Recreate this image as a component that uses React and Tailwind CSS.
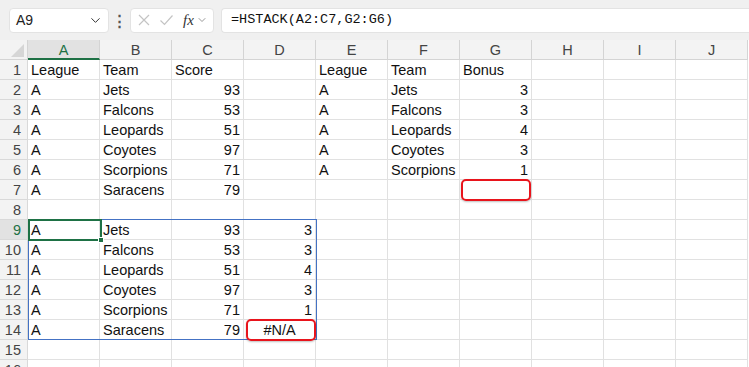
import { ChevronDown } from "lucide-react";

const cols = ["A", "B", "C", "D", "E", "F", "G", "H", "I", "J"];
const teams = ["Jets", "Falcons", "Leopards", "Coyotes", "Scorpions", "Saracens"];
const scores = [93, 53, 51, 97, 71, 79];
const bonus = [3, 3, 4, 3, 1];

// build the sheet: each row is a map of column -> value
function buildRows() {
  const rows = [];
  rows.push({ A: "League", B: "Team", C: "Score", E: "League", F: "Team", G: "Bonus" });
  for (let i = 0; i < 6; i++) {
    const r = { A: "A", B: teams[i], C: scores[i] };
    if (i < 5) {
      r.E = "A";
      r.F = teams[i];
      r.G = bonus[i];
    }
    rows.push(r);
  }
  rows.push({});
  for (let i = 0; i < 6; i++) {
    rows.push({ A: "A", B: teams[i], C: scores[i], D: i < 5 ? bonus[i] : "#N/A" });
  }
  rows.push({});
  rows.push({});
  return rows;
}

function Cell({ value }) {
  const isNum = typeof value === "number";
  const isErr = value === "#N/A";
  return (
    <div
      className={`h-5 border-r border-b border-[#e1e1e1] text-[14.5px] pt-px leading-[19px] text-[#111] px-[3px] whitespace-nowrap ${
        isNum ? "text-right" : isErr ? "text-center" : "text-left"
      }`}
    >
      {value}
    </div>
  );
}

function FormulaBar() {
  return (
    <div className="h-10 bg-[#f0f0f0] flex items-center pl-[9px] gap-0">
      <div className="w-[100px] h-[25px] bg-white rounded-[4px] border border-[#e3e3e3] flex items-center justify-between pl-[6px] pr-[5px]">
        <span className="text-[14px] text-[#222]">A9</span>
        <ChevronDown size={15} strokeWidth={1.6} className="text-[#333]" />
      </div>
      <div className="w-[21px] flex justify-center text-[#555] text-[15px] font-bold leading-none">⋮</div>
      <div className="w-[84px] h-[25px] bg-white rounded-[4px] border border-[#e3e3e3] flex items-center pl-[6px] pr-[3px]">
        <svg width="14" height="14" viewBox="0 0 14 14" className="mr-[8px]">
          <path d="M2 2 L12 12 M12 2 L2 12" stroke="#c4c4c4" strokeWidth="1.2" fill="none" />
        </svg>
        <svg width="15" height="14" viewBox="0 0 15 14" className="mr-[9px]">
          <path d="M1.5 7.5 L5.5 11.5 L13.5 2.5" stroke="#c4c4c4" strokeWidth="1.2" fill="none" />
        </svg>
        <span className="text-[15px] italic text-[#333] leading-none" style={{ fontFamily: '"Liberation Serif", serif' }}>
          fx
        </span>
        <ChevronDown size={12} strokeWidth={1.5} className="text-[#777] ml-[2px]" />
      </div>
      <div className="flex-1 h-[25px] bg-white rounded-l-[4px] border border-r-0 border-[#e3e3e3] ml-[7px] flex items-center pl-[9px]">
        <span className="text-[13.5px] text-[#111] font-['Liberation_Mono',monospace]">=HSTACK(A2:C7,G2:G6)</span>
      </div>
    </div>
  );
}

export default function App() {
  const rows = buildRows();
  return (
    <div className="w-[749px] h-[367px] overflow-hidden bg-white font-['Liberation_Sans',Arial,sans-serif] relative">
      <FormulaBar />
      <div className="grid grid-cols-[28px_repeat(10,72px)]">
        {/* column headers */}
        <div className="h-5 bg-[#f3f3f3] border-r border-b border-[#d4d4d4] flex items-end justify-end pr-[3px] pb-[2px]">
          <svg width="13" height="13" viewBox="0 0 13 13">
            <path d="M13 0 L13 13 L0 13 Z" fill="#d6d6d6" />
          </svg>
        </div>
        {cols.map((c) => (
          <div
            key={c}
            className={`h-5 text-[14.5px] pt-px leading-[18px] text-center border-r border-[#d4d4d4] ${
              c === "A"
                ? "bg-[#e2e2e2] text-[#1e7145] border-b-2 border-b-[#1e7145]"
                : "bg-[#f3f3f3] text-[#444] border-b border-b-[#d4d4d4]"
            }`}
          >
            {c}
          </div>
        ))}
        {rows.map((r, i) => (
          <div key={i} className="contents">
            <div
              className={`h-5 pr-[6px] text-right text-[14.5px] pt-px leading-[19px] border-r border-b border-[#d9d9d9] ${
                i === 8 ? "bg-[#e2e2e2] text-[#1e7145]" : "bg-[#f3f3f3] text-[#444]"
              }`}
            >
              {i + 1}
            </div>
            {cols.map((c) => (
              <Cell key={c} value={r[c]} />
            ))}
          </div>
        ))}
      </div>

      {/* spill range outline A9:D14 */}
      <div className="absolute left-[28px] top-[219px] w-[289px] h-[121px] border border-[#4472c4] pointer-events-none" />
      {/* active cell A9 */}
      <div className="absolute left-[28px] top-[219px] w-[74px] h-[22px] border-2 border-[#1e7145] pointer-events-none" />
      <div className="absolute left-[98px] top-[237px] w-[6px] h-[6px] bg-[#1e7145] border border-white pointer-events-none" />

      {/* red callouts */}
      <div className="absolute left-[461px] top-[179px] w-[70px] h-[22px] rounded-[5px] border-2 border-[#e8141c] shadow-[0_1px_2px_rgba(0,0,0,0.25)] pointer-events-none" />
      <div className="absolute left-[246px] top-[319px] w-[70px] h-[22px] rounded-[5px] border-2 border-[#e8141c] shadow-[0_1px_2px_rgba(0,0,0,0.25)] pointer-events-none" />
    </div>
  );
}
